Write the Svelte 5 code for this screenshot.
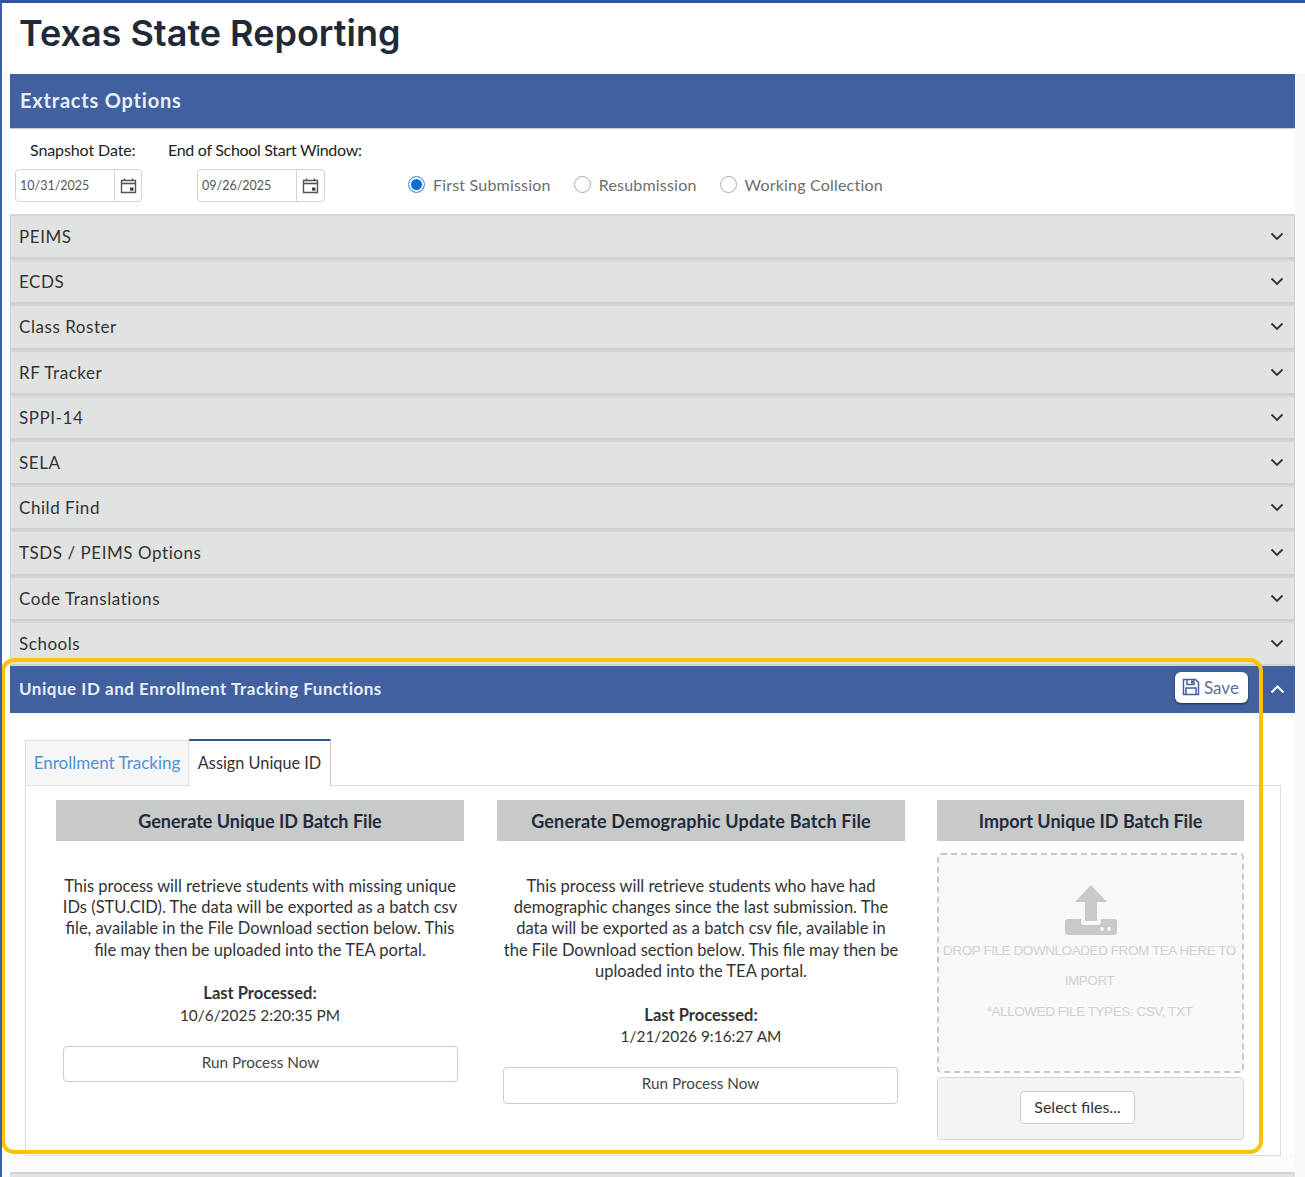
<script>
  const rows = ['PEIMS','ECDS','Class Roster','RF Tracker','SPPI-14','SELA','Child Find','TSDS / PEIMS Options','Code Translations','Schools'];
  const dates = [
    { label: 'Snapshot Date:', value: '10/31/2025', cls: 'first' },
    { label: 'End of School Start Window:', value: '09/26/2025', cls: 'second' }
  ];
  const radios = [
    { label: 'First Submission', on: true },
    { label: 'Resubmission', on: false },
    { label: 'Working Collection', on: false }
  ];
  const columns = [
    { title: 'Generate Unique ID Batch File', when: '10/6/2025 2:20:35 PM',
      lines: ['This process will retrieve students with missing unique','IDs (STU.CID). The data will be exported as a batch csv','file, available in the File Download section below. This','file may then be uploaded into the TEA portal.'] },
    { title: 'Generate Demographic Update Batch File', when: '1/21/2026 9:16:27 AM',
      lines: ['This process will retrieve students who have had','demographic changes since the last submission. The','data will be exported as a batch csv file, available in','the File Download section below. This file may then be','uploaded into the TEA portal.'] }
  ];
</script>

<div class="page">
  <h1>Texas State Reporting</h1>
  <div class="panel">
    <div class="head extracts">Extracts Options</div>
    <div class="options">
      {#each dates as d}
        <div class="field {d.cls}">
          <label for={d.cls}>{d.label}</label>
          <div class="date">
            <input id={d.cls} value={d.value} readonly />
            <span class="cal">
              <svg width="17" height="17" viewBox="0 0 17 17"><path d="M1.5 3.5h14v12h-14z" fill="none" stroke="#555" stroke-width="1.4"/><path d="M1.5 6.5h14" stroke="#555" stroke-width="1.6"/><path d="M4.5 1.5v2.5M12.5 1.5v2.5" stroke="#555" stroke-width="1.5"/><rect x="10" y="10.5" width="3.5" height="3.2" fill="#444"/></svg>
            </span>
          </div>
        </div>
      {/each}
      <div class="radios">
        {#each radios as r}
          <div class="radio"><span class="dot" class:on={r.on}></span>{r.label}</div>
        {/each}
      </div>
    </div>
    {#each rows as r}
      <div class="row">
        <span>{r}</span>
        <svg width="14" height="9" viewBox="0 0 14 9"><path d="M1.5 1.5 7 7l5.5-5.5" fill="none" stroke="#333" stroke-width="1.8"/></svg>
      </div>
    {/each}
    <div class="head section">
      <span>Unique ID and Enrollment Tracking Functions</span>
      <div class="tools">
        <button class="save">
          <svg width="18" height="18" viewBox="0 0 18 18"><path d="M1.5 1.5h12l3 3v12h-15z" fill="none" stroke="#41609f" stroke-width="1.5"/><path d="M5 1.5v5h7v-5M4 16.5v-6.5h10v6.5" fill="none" stroke="#41609f" stroke-width="1.5"/><rect x="9" y="2.5" width="2" height="3" fill="#41609f"/></svg>
          Save
        </button>
        <svg class="up" width="15" height="10" viewBox="0 0 15 10"><path d="M1.5 8.5 7.5 2.5l6 6" fill="none" stroke="#fff" stroke-width="2"/></svg>
      </div>
    </div>
    <div class="body">
      <div class="tabs">
        <div class="tab">Enrollment Tracking</div>
        <div class="tab active">Assign Unique ID</div>
      </div>
      <div class="content">
        {#each columns as c}
          <div class="col">
            <h3>{c.title}</h3>
            <p class="desc">{#each c.lines as l}{l}<br />{/each}</p>
            <p class="last"><b>Last Processed:</b><br /><span class="when">{c.when}</span></p>
            <button class="run">Run Process Now</button>
          </div>
        {/each}
        <div class="col import">
          <h3>Import Unique ID Batch File</h3>
          <div class="drop">
            <svg width="52" height="50" viewBox="0 0 52 50"><path d="M26 0 42 17H32V36H20V17H10Z" fill="#c9c9c9"/><path d="M3 34H16V37a3 3 0 0 0 3 3H33a3 3 0 0 0 3-3V34H49a3 3 0 0 1 3 3V47a3 3 0 0 1-3 3H3a3 3 0 0 1-3-3V37a3 3 0 0 1 3-3Z" fill="#c9c9c9"/><circle cx="37" cy="44" r="2" fill="#f8f8f8"/><circle cx="44" cy="44" r="2" fill="#f8f8f8"/></svg>
            <div class="droptext">DROP FILE DOWNLOADED FROM TEA HERE TO<br />IMPORT<br />*ALLOWED FILE TYPES: CSV, TXT</div>
          </div>
          <div class="upload"><button class="select">Select files...</button></div>
        </div>
      </div>
    </div>
    <div class="next"></div>
  </div>
  <div class="highlight"></div>
</div>

<style>
  :global(body) { margin: 0; background: #fff; }
  .page {
    position: relative; box-sizing: border-box; height: 1177px; overflow: hidden;
    border-top: 3px solid #2f55a4; border-left: 2px solid #3b5fae;
    padding-left: 8px;
    font-family: Lato, "Noto Sans", sans-serif; color: #333;
    background: #fff;
  }
  .page::after { content: ""; position: absolute; left: 1293px; right: 0; top: 71px; bottom: 0; background: #f8f8f8; }
  .page::before { content: ""; position: absolute; left: 0; width: 8px; top: 71px; bottom: 0; background: #f8fafc; }
  h1 { margin: 0; height: 71px; padding: 7px 0 0 9px; box-sizing: border-box; font: 600 36px/46px Inter, sans-serif; letter-spacing: 0; color: #1f2937; }
  .panel { position: relative; width: 1285px; background: #fbfbfb; }
  .head { background: #40609f; color: #e9edf5; box-sizing: border-box; display: flex; align-items: center; padding-left: 10px; font-weight: 700; letter-spacing: 0.8px; }
  .extracts { height: 55px; font-size: 20px; padding-bottom: 3px; border-bottom: 1px solid #c9cdd6; }
  .section { height: 47px; font-size: 17px; padding: 0 0 2px 9px; justify-content: space-between; letter-spacing: 0.52px; }
  .options { height: 85px; box-sizing: border-box; display: flex; align-items: flex-start; padding: 12px 0 0 5px; background: #fff; }
  .field { display: flex; flex-direction: column; font-size: 16px; color: #222; }
  .field label { height: 28px; line-height: 18px; white-space: nowrap; letter-spacing: -0.3px; }
  .first { width: 127px; }
  .first label { padding-left: 15px; letter-spacing: -0.1px; }
  .second { margin-left: 26px; width: 194px; }
  .second .date { margin-left: 29px; width: 128px; }
  .date { display: flex; height: 33px; box-sizing: border-box; border: 1px solid #d4d4d4; border-radius: 4px; }
  .date input { width: 99px; min-width: 0; border: 0; border-right: 1px solid #d4d4d4; padding: 0 0 0 4px; box-sizing: border-box; font: 12.5px Lato, sans-serif; color: #555; background: none; outline: none; height: 31px; }
  .cal { flex: 1; display: flex; align-items: center; justify-content: center; }
  .radios { display: flex; margin: 27px 0 0 46px; gap: 23px; }
  .radio { display: flex; align-items: center; gap: 8px; height: 33px; font-size: 16px; color: #6d6d6d; white-space: nowrap; letter-spacing: 0.2px; }
  .dot { width: 17px; height: 17px; box-sizing: border-box; border: 1.5px solid #aaa; border-radius: 50%; background: #fff; }
  .dot.on { border: 1.5px solid #5a9fe6; background: #0a6ed1; box-shadow: inset 0 0 0 2px #fff; }
  .row { height: 45.2px; box-sizing: border-box; background: #e1e3e2; border: 1px solid #d0d1d1; border-bottom: 2px solid #cfd0d0; border-top: 2px solid #d4d5d5; display: flex; align-items: center; justify-content: space-between; padding: 0 10px 0 8px; font-size: 17px; color: #333; letter-spacing: 0.55px; }
  .tools { display: flex; align-items: center; gap: 22px; padding-right: 10px; }
  .save { display: flex; align-items: center; gap: 4px; box-sizing: border-box; width: 73px; height: 31px; margin-top: -2px; padding: 0 0 0 7px; border: 0; border-radius: 6px; background: #fff; box-shadow: 0 1px 2px #1d2b4d; font: 17px Lato, sans-serif; line-height: 27px; color: #5a6f9c; }
  .up { margin-top: 2px; }
  .body { height: 442px; box-sizing: border-box; padding: 26px 14px 0 15px; background: #fff; }
  .tabs { display: flex; height: 47px; align-items: flex-end; position: relative; z-index: 1; margin-bottom: -1px; }
  .tab { box-sizing: border-box; width: 164px; height: 46px; line-height: 44px; text-align: center; font-size: 17px; background: #f6f6f6; color: #4e93cf; border: 1px solid #ddd; white-space: nowrap; }
  .tab.active { width: 142px; height: 47px; font-size: 16.3px; background: #fff; color: #333; border-top: 2px solid #2f55a4; border-left: 0; border-bottom: 0; border-right: 1px solid #ccc; }
  .content { box-sizing: border-box; height: 371px; border: 1px solid #ddd; padding: 14px 36px 0 30px; display: flex; gap: 33px; }
  .col { width: 408px; flex: none; text-align: center; }
  .import { width: 307px; margin-left: -1px; }
  h3 { margin: 0; height: 41px; line-height: 43px; background: #c8c9c9; color: #222b3d; font-size: 18px; font-weight: 700; }
  .col:nth-child(2) h3 { letter-spacing: 0.18px; }
  p { margin: 0; font-size: 16.5px; line-height: 21.3px; color: #333; white-space: nowrap; }
  .desc { margin-top: 35px; }
  .last { margin-top: 22.3px; }
  .when { font-size: 15.4px; }
  .run { display: block; box-sizing: border-box; width: 395px; height: 36.5px; margin: 20px 0 0 7px; padding: 0 0 5px; border: 1px solid #ccc; border-radius: 4px; background: #fff; font: 15.3px Lato, sans-serif; color: #444; }
  .col:nth-child(2) .run { margin-left: 6px; }
  .drop { box-sizing: border-box; height: 220px; margin-top: 12px; border: 2px dashed #c9c9c9; border-radius: 4px; background: #f8f8f8; padding-top: 30px; display: flex; flex-direction: column; align-items: center; }
  .droptext { margin: 1px 0 0 -2px; font: 13.5px/30.5px "Liberation Sans", sans-serif; letter-spacing: -0.43px; color: #d2d2d2; white-space: nowrap; }
  .upload { box-sizing: border-box; height: 63px; margin-top: 4px; padding: 0 0 2px 82px; border: 1px solid #d6d6d6; border-radius: 4px; background: #f4f4f4; display: flex; align-items: center; }
  .select { box-sizing: border-box; width: 115px; height: 33px; padding-bottom: 2px; border: 1px solid #ccc; border-radius: 4px; background: #fff; font: 16px Lato, sans-serif; color: #333; }
  .next { height: 5px; margin-top: 17px; background: #e1e3e2; border-top: 2px solid #d4d5d5; box-sizing: border-box; }
  .highlight { position: absolute; z-index: 2; left: -1px; top: 655px; width: 1262px; height: 496px; box-sizing: border-box; border: 4px solid #fdc300; border-radius: 13px; pointer-events: none; }
</style>
